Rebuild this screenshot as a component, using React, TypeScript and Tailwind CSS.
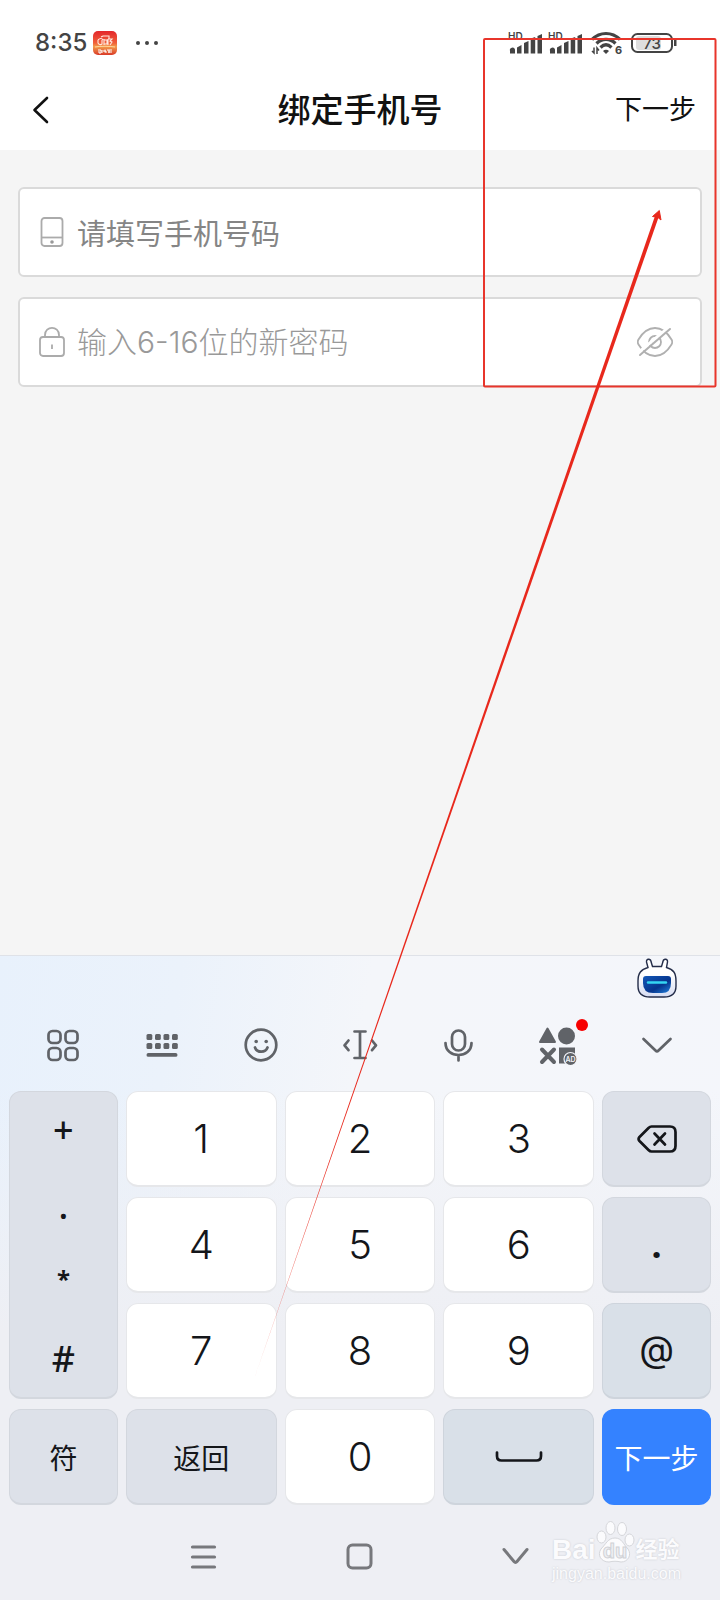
import { useState } from "react";
import type { ReactNode } from "react";

interface KeyProps {
  label: string;
  className?: string;
  children?: ReactNode;
}

const digitFont = "font-['Inter','Noto_Sans_CJK_SC',sans-serif]";
const grayKey = "bg-[#dde1e9] border-[#d3d7de]";
const whiteKey = "bg-white border-[#e6e7ea]";

function Signal() {
  return (
    <svg className="w-[34px] h-6 overflow-visible" viewBox="0 0 34 24" fill="#444">
      <text x="-1" y="8.500" fontSize="10" fontWeight="600" fontFamily="Inter, sans-serif">HD</text>
      <path d="M1 22.500v-2.500a2 2 0 0 1 5-1.500v4zM8 22.500v-6l4.500-2.500v8.500zM15 22.500v-10.500l4.500-2v12.500zM21.700 22.500v-15l4.500-1.500v16.500zM28.500 22.500v-17.500l4.500-2v19.500z" />
    </svg>
  );
}

function Wifi() {
  return (
    <svg className="w-8 h-6 overflow-visible" viewBox="0 0 32 24" fill="none" stroke="#444" strokeWidth="3.200">
      <path d="M1 8.500C9 .5 21 .5 29 8.500" />
      <path d="M5.500 12.500C11 7 19 7 24.500 12.500" />
      <path d="M9.500 16.500C13 13 17 13 20.500 16.500" />
      <path d="M12 20l3 3 3-3a4 4 0 0 0-6 0z" fill="#444" stroke="none" />
      <path d="M1 20l2 2v-5.500M8 19.500l-2-2.500v6" strokeWidth="1.500" />
      <text x="24" y="23" fontSize="11" fontWeight="700" fontFamily="Inter, sans-serif" fill="#444" stroke="none">6</text>
    </svg>
  );
}

function Battery() {
  return (
    <svg className="w-[46px] h-[22px]" viewBox="0 0 46 22">
      <rect x="5" y="4" width="25" height="14" rx="3" fill="#dedede" />
      <rect x="1" y="2" width="40" height="18" rx="5.500" fill="none" stroke="#444" strokeWidth="2" />
      <path d="M43 8h2.500v6H43z" fill="#444" />
      <text x="21" y="16.500" textAnchor="middle" fontSize="15" fontWeight="500" fontFamily="Inter, sans-serif" fill="#444">73</text>
    </svg>
  );
}

function AppBadge() {
  return (
    <svg className="w-6 h-6" viewBox="0 0 24 24" fill="none">
      <defs>
        <linearGradient id="badge" x1="0" y1="0" x2="0" y2="1">
          <stop offset="0" stopColor="#e3262c" />
          <stop offset=".5" stopColor="#f0603a" />
          <stop offset=".65" stopColor="#f39a4a" />
          <stop offset="1" stopColor="#d93a28" />
        </linearGradient>
      </defs>
      <rect width="24" height="24" rx="5" fill="url(#badge)" />
      <path d="M8 6l2-1h6v3M5 9c2-2 4-2 5 0M5 9v3c1 2 3 2 4 1V9M11 8v6M11 9h3v4h-3M15 8h4l-2 2 2 1-2 3M15 8v6" stroke="#ffe9e0" strokeWidth="1.100" />
      <path d="M2 16c6-1 14-1 20 0" stroke="#ffd9a0" strokeWidth="1" />
      <path d="M5 19h3v3H6v-2M9 19v3M10 20h3v2M12 18.500v3M14 19h5M15 21h4M16 19v3" stroke="#fff" strokeWidth="1" />
    </svg>
  );
}

function Robot() {
  return (
    <svg className="w-10 h-10" viewBox="0 0 40 40">
      <defs>
        <linearGradient id="visor" x1="0" y1="0" x2="1" y2="1">
          <stop offset="0" stopColor="#1458b8" />
          <stop offset=".6" stopColor="#06358d" />
          <stop offset="1" stopColor="#2180dc" />
        </linearGradient>
        <linearGradient id="shell" x1="0" y1="0" x2="0" y2="1">
          <stop offset=".4" stopColor="#fff" />
          <stop offset="1" stopColor="#d6dcf2" />
        </linearGradient>
      </defs>
      <path
        d="M11 9.500L9.500 4C9 .6 13.500.2 14 3.500L15.500 8.500h9L26 3.500C26.500.2 31 .6 30.500 4L29.500 9.500C36.500 11.500 39 15 39 23V28C39 35.500 35 39 27 39H13C5 39 1 35.500 1 28V23C1 15 4 11.500 11 9.500Z"
        fill="url(#shell)"
        stroke="#242d49"
        strokeWidth="1.400"
      />
      <path d="M9 18h22q3 0 3 3v4q0 10-9 10H16q-10 0-10-10v-4q0-3 3-3z" fill="url(#visor)" />
      <path d="M11 24.500h18" stroke="#35d6f2" strokeWidth="2.400" strokeLinecap="round" />
    </svg>
  );
}

function ToolIcon({ children }: { children: ReactNode }) {
  return (
    <svg className="w-10 h-10" viewBox="0 0 40 40" fill="none" stroke="#606368" strokeWidth="2.700" strokeLinecap="round" strokeLinejoin="round">
      {children}
    </svg>
  );
}

function Key({ label, className = "", children }: KeyProps) {
  return (
    <button
      type="button"
      aria-label={label}
      className={`h-24 rounded-xl border border-b-2 flex items-center justify-center text-[#14161a] ${className}`}
    >
      {children ?? label}
    </button>
  );
}

function DigitKey({ label }: { label: string }) {
  return <Key label={label} className={`${whiteKey} ${digitFont} text-[40px] font-light`} />;
}

const tools = [
  {
    name: "菜单",
    icon: (
      <ToolIcon>
        <rect x="5.500" y="6" width="12" height="12" rx="4" />
        <rect x="22.500" y="6" width="12" height="12" rx="4" />
        <rect x="5.500" y="23" width="12" height="12" rx="4" />
        <rect x="22.500" y="23" width="12" height="12" rx="4" />
      </ToolIcon>
    ),
  },
  {
    name: "键盘",
    icon: (
      <ToolIcon>
        <g fill="#606368" stroke="none">
          {[4.5, 13, 21.5, 30].map((x) => (
            <g key={x}>
              <rect x={x} y="9" width="5.800" height="6" rx="1.500" />
              <rect x={x} y="18" width="5.800" height="6" rx="1.500" />
            </g>
          ))}
          <rect x="4.500" y="28" width="31" height="3.800" rx="1.900" />
        </g>
      </ToolIcon>
    ),
  },
  {
    name: "表情",
    icon: (
      <ToolIcon>
        <circle cx="20" cy="20" r="15.300" />
        <path d="M14 22.500c2 5.600 10.500 5.600 12.500 0" />
        <circle cx="15.200" cy="16.500" r="1.800" fill="#606368" stroke="none" />
        <circle cx="25.200" cy="16.500" r="1.800" fill="#606368" stroke="none" />
      </ToolIcon>
    ),
  },
  {
    name: "光标",
    icon: (
      <ToolIcon>
        <path d="M14.500 6.500h11M14.500 33h11M20 6.500V33" />
        <path d="M8.500 15.500l-4 4.800 4 4.800M32 15.500l4 4.800-4 4.800" />
      </ToolIcon>
    ),
  },
  {
    name: "语音",
    icon: (
      <ToolIcon>
        <rect x="13" y="5.500" width="13" height="20" rx="6.500" />
        <path d="M6.500 18c0 16 26 16 26 0M19.500 30.500v5" />
      </ToolIcon>
    ),
  },
  {
    name: "推荐",
    icon: (
      <span className="relative">
        <ToolIcon>
          <path d="M9.500 3.500l7.500 13.500H2z" fill="#606368" strokeWidth="2" />
          <circle cx="28.500" cy="11" r="8.500" fill="#606368" stroke="none" />
          <path d="M4 24.500l12 12.500M16 24.500l-12 12.500" strokeWidth="4" />
          <path d="M21 22.500h16v16H21z" fill="#606368" stroke="none" />
          <circle cx="32.500" cy="34" r="6.500" fill="#606368" stroke="#f2f4f9" strokeWidth="1.200" />
          <text x="32.500" y="36.500" textAnchor="middle" fontSize="7" fontWeight="600" fontFamily="Inter, sans-serif" fill="#f2f4f9" stroke="none">AD</text>
        </ToolIcon>
        <span className="absolute -top-1.5 -right-2.5 size-3 rounded-full bg-[#f70000]" />
      </span>
    ),
  },
  {
    name: "收起",
    icon: (
      <ToolIcon>
        <path d="M6.500 14l12 11.500q1.500 1.500 3 0L33.500 14" />
      </ToolIcon>
    ),
  },
];

function Watermark() {
  return (
    <div className="absolute right-10 bottom-4 w-32 pointer-events-none font-['Liberation_Sans','Noto_Sans_CJK_SC',sans-serif] text-[#fbfbfd] [text-shadow:0_0_2px_#c3c5cb]">
      <div className="flex items-end h-11">
        <span className="text-[28px] leading-7 font-bold">Bai</span>
        <svg className="w-10 h-11 [text-shadow:none]" viewBox="0 0 40 44" fill="#fbfbfd" stroke="#d5d6da" strokeWidth="1">
          <ellipse cx="5.500" cy="17" rx="4.500" ry="6" />
          <ellipse cx="14.500" cy="8" rx="4.500" ry="6.500" />
          <ellipse cx="26" cy="9" rx="4.500" ry="6.500" />
          <ellipse cx="33.500" cy="20" rx="4.500" ry="6" />
          <path d="M19 18c7 0 8 6 13 11 4 6 0 13-7 13-4-1-8-1-12 0-8 0-12-7-8-13C10 24 12 18 19 18z" />
          <text x="19" y="38" textAnchor="middle" fontSize="20" fontWeight="700" fontFamily="Liberation Sans, sans-serif" fill="#eeeff3" stroke="#d0d2d6">du</text>
        </svg>
        <span className="text-[22px] leading-7 font-bold whitespace-nowrap">经验</span>
      </div>
      <div className="text-base leading-5">jingyan.baidu.com</div>
    </div>
  );
}

// Marco y flecha rojos que señalan el botón
function Annotation() {
  return (
    <svg className="absolute inset-0 w-full h-full pointer-events-none" viewBox="0 0 720 1600">
      <defs>
        <linearGradient id="fade" x1="0" y1="0" x2="0" y2="1">
          <stop offset="0" stopColor="#e8281c" />
          <stop offset=".8" stopColor="#e8281c" />
          <stop offset="1" stopColor="#e8281c" stopOpacity=".5" />
        </linearGradient>
      </defs>
      <rect x="484" y="39" width="231.500" height="347.500" rx="1" fill="none" stroke="#e8352b" strokeWidth="2" />
      <path d="M655.500 214.500L252 1385L659 216z" fill="url(#fade)" />
      <path d="M659.300 210.500L652.500 216.500L656 217L658.500 218L661 220z" fill="#e8281c" stroke="#e8281c" strokeWidth="1" strokeLinejoin="round" />
    </svg>
  );
}

export default function App() {
  const [phone, setPhone] = useState("");
  const [password, setPassword] = useState("");
  const [visible, setVisible] = useState(false);

  return (
    <div className="relative min-h-screen flex flex-col bg-[#f5f5f5] font-['Noto_Sans_CJK_SC',sans-serif] text-[#111]">
      <header className="bg-white">
        <div className="h-[70px] pt-4 pl-[35px] pr-[43px] flex items-center text-[#444]">
          <span className={`${digitFont} text-2xl font-medium`}>8:35</span>
          <span className="ml-[6px]"><AppBadge /></span>
          <svg className="ml-[18px] w-6 h-6" viewBox="0 0 24 24" fill="#444">
            <circle cx="3" cy="12" r="2" />
            <circle cx="12" cy="12" r="2" />
            <circle cx="21" cy="12" r="2" />
          </svg>
          <div className="ml-auto flex items-center gap-[6px]">
            <Signal />
            <Signal />
            <span className="ml-[2px]"><Wifi /></span>
            <span className="ml-[2px]"><Battery /></span>
          </div>
        </div>
        <div className="h-20 px-6 grid grid-cols-3 items-center">
          <button type="button" aria-label="返回上一页" className="justify-self-start pl-2">
            <svg className="w-5 h-7" viewBox="0 0 20 28" fill="none" stroke="#111" strokeWidth="2.600" strokeLinecap="round" strokeLinejoin="round">
              <path d="M15 2L2.500 14L15 26" />
            </svg>
          </button>
          <h1 className="pb-1 text-[33px] leading-10 font-medium text-center whitespace-nowrap">绑定手机号</h1>
          <button type="button" className="pb-1 justify-self-end text-[27px] leading-10">下一步</button>
        </div>
      </header>

      <main className="flex-1 px-[18px] pt-[37px]">
        <form className="flex flex-col gap-5">
          <div className="h-[90px] px-[19px] flex items-center gap-3 rounded-md border-2 border-[#dadada] bg-white">
            <svg className="w-[26px] h-8 shrink-0" viewBox="0 0 26 32" fill="none" stroke="#ababab" strokeWidth="1.800">
              <rect x="2.500" y="2" width="21" height="28" rx="3" />
              <path d="M2.500 21.500h21" />
              <circle cx="13" cy="26" r="1.800" fill="#999" stroke="none" />
            </svg>
            <input
              type="tel"
              aria-label="手机号码"
              value={phone}
              onChange={(e) => setPhone(e.target.value)}
              placeholder="请填写手机号码"
              className="flex-1 min-w-0 h-full text-[29px] outline-none placeholder:text-[#858585]"
            />
          </div>
          <div className="h-[90px] px-[19px] flex items-center gap-3 rounded-md border-2 border-[#dadada] bg-white">
            <svg className="w-[26px] h-8 shrink-0" viewBox="0 0 26 32" fill="none" stroke="#ababab" strokeWidth="1.800">
              <rect x="1" y="11" width="24" height="19" rx="3" />
              <path d="M6 11V9C6 -.5 20 -.5 20 9V11M13 18.500v4.500" />
            </svg>
            <input
              type={visible ? "text" : "password"}
              aria-label="新密码"
              value={password}
              onChange={(e) => setPassword(e.target.value)}
              placeholder="输入6-16位的新密码"
              className="flex-1 min-w-0 h-full font-['Inter','Noto_Sans_CJK_SC',sans-serif] text-[30px] font-light outline-none placeholder:text-[#999]"
            />
            <button type="button" aria-label="显示密码" className="mr-2" onClick={() => setVisible(!visible)}>
              <svg className="w-9 h-[30px]" viewBox="0 0 36 30" fill="none" stroke="#b0b0b0" strokeWidth="1.800" strokeLinecap="round">
                <path d="M1.500 17.500Q0 15 1.500 12.500C6 5 12 1 18 1S30 5 34.500 12.500Q36 15 34.500 17.500C30 25 24 29 18 29S6 25 1.500 17.500Z" />
                <circle cx="18" cy="15" r="6" />
                <path d="M15 15.500a3 3 0 0 1 3-3" />
                <path d="M1.500 25.500L31.500.500" stroke="#fff" strokeWidth="3" />
                <path d="M3 28L33 2" strokeWidth="2" />
              </svg>
            </button>
          </div>
        </form>
      </main>

      <section className="relative bg-[#eeeff4] bg-[linear-gradient(100deg,#e8f1fc_0%,#ebf2fb_22%,#f4f6fa_45%,#f4f6fb_100%)]">
        <div className="h-11 pr-[43px] flex items-center justify-end border-t border-[#dfe2e8]">
          <button type="button" aria-label="助手"><Robot /></button>
        </div>
        <div className="h-[92px] px-[14px] grid grid-cols-7 place-items-center">
          {tools.map((tool) => (
            <button key={tool.name} type="button" aria-label={tool.name} className="flex">
              {tool.icon}
            </button>
          ))}
        </div>

        <div className="bg-[linear-gradient(180deg,#eeeff400_0px,#eeeff4_240px)]">
          <div className="px-[9px] pb-2 grid grid-cols-[109fr_151fr_151fr_151fr_109fr] gap-x-2 gap-y-[10px] text-[28px]">
            <div className={`row-span-3 rounded-xl border border-b-2 ${grayKey} grid grid-rows-4 font-['Noto_Sans',sans-serif] text-4xl font-medium text-[#14161a]`}>
              <button type="button">+</button>
              <button type="button">.</button>
              <button type="button" className="pb-2 text-2xl font-bold">*</button>
              <button type="button">#</button>
            </div>
            <DigitKey label="1" />
            <DigitKey label="2" />
            <DigitKey label="3" />
            <Key label="删除" className={grayKey}>
              <svg className="w-10 h-7" viewBox="0 0 40 28" fill="none" stroke="#14161a" strokeWidth="2.700" strokeLinecap="round" strokeLinejoin="round">
                <path d="M14.500 1.500H33q5.500 0 5.500 5.500v14q0 5.500-5.500 5.500H14.500q-1.500 0-3-1.500L2.500 16q-1.800-2 0-4l9-9q1.500-1.500 3-1.500z" />
                <path d="M17.500 8.500l10.500 11M28 8.500l-10.500 11" />
              </svg>
            </Key>

            <DigitKey label="4" />
            <DigitKey label="5" />
            <DigitKey label="6" />
            <Key label="." className={`${grayKey} font-['Noto_Sans',sans-serif] text-4xl font-bold`} />

            <DigitKey label="7" />
            <DigitKey label="8" />
            <DigitKey label="9" />
            <Key label="@" className={`bg-[#d9e0e8] border-[#ced4dc] ${digitFont} pb-1 text-4xl`} />

            <Key label="符" className={grayKey} />
            <Key label="返回" className={grayKey} />
            <DigitKey label="0" />
            <Key label="空格" className="bg-[#d9e0e8] border-[#ced4dc]">
              <svg className="w-12 h-3" viewBox="0 0 48 12" fill="none" stroke="#14161a" strokeWidth="2.700" strokeLinecap="round">
                <path d="M2 1.500V5q0 4.500 4.500 4.500h35Q46 9.500 46 5V1.500" />
              </svg>
            </Key>
            <Key label="下一步" className="bg-[#3482ff] border-[#3482ff] text-white" />
          </div>

          <nav className="h-[87px] px-[126px] grid grid-cols-3 place-items-center">
            <button type="button" aria-label="最近任务">
              <svg className="w-7 h-7" viewBox="0 0 28 28" stroke="#77787c" strokeWidth="3.200" strokeLinecap="round">
                <path d="M2.500 4h22M2.500 14h22M2.500 24h22" />
              </svg>
            </button>
            <button type="button" aria-label="主屏幕">
              <svg className="w-7 h-7" viewBox="0 0 28 28" fill="none" stroke="#77787c" strokeWidth="3">
                <rect x="2" y="2" width="23" height="23" rx="4.500" />
              </svg>
            </button>
            <button type="button" aria-label="收起键盘">
              <svg className="w-7 h-7" viewBox="0 0 28 28" fill="none" stroke="#77787c" strokeWidth="3" strokeLinecap="round" strokeLinejoin="round">
                <path d="M2 6.500l10 12q1.500 1.800 3 0L25 6.500" />
              </svg>
            </button>
          </nav>
        </div>
        <Watermark />
      </section>

      <Annotation />
    </div>
  );
}
